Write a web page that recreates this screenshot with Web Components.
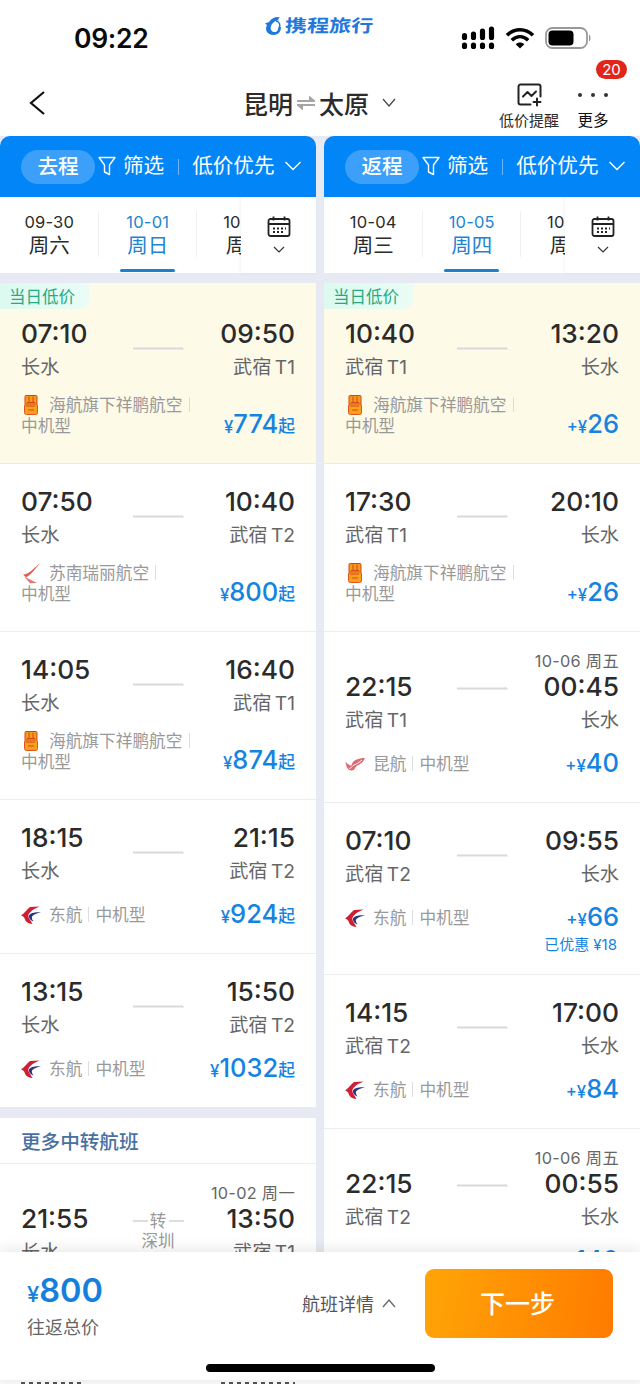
<!DOCTYPE html>
<html lang="zh-CN">
<head>
<meta charset="utf-8">
<title>昆明 - 太原</title>
<style>
  body {
    margin: 0;
    background: #fff;
    font-family: Inter, "Noto Sans CJK SC", sans-serif;
    color: #2b2b2b;
  }
</style>
</head>
<body>
<flight-app></flight-app>

<script>
const LOGOS = {
  lucky: `<svg width="20" height="22" viewBox="0 0 20 22">
    <rect x="4" y="1.500" width="12" height="9.500" rx="1" fill="#f59a1c" stroke="#d9421e"/>
    <rect x="3.500" y="10" width="13" height="10.500" rx="2" fill="#f8a01b" stroke="#e0531c"/>
    <path d="M8 2.500v6M12 2.500v6M6 8.500h8M5 12h9M7 16h6" stroke="#cf4b1b" fill="none"/></svg>`,
  ruili: `<svg width="20" height="22" viewBox="0 0 20 22">
    <path d="M19 1C15 6 10 13 5 15.300L2 12.500C8 12.500 13 6 19 1z" fill="#de5a4e"/>
    <path d="M3 14.500l5 2.500 8 4-7 .3-3-3.500z" fill="#e07a70"/></svg>`,
  kunming: `<svg width="20" height="22" viewBox="0 0 20 22">
    <path d="M20 5C12 5 7 8 6.500 12.500 5 13 2.500 11 .5 8.500 1 14 3 17.500 6.500 17.500c4 0 3-3.500 6-5 3-1.500 5.500-3 7.500-7.500z" fill="#dd6b73"/>
    <path d="M8 12.500c3-1 6-3 9-5.500M4 15.500c2-.5 3-1.500 4-3" stroke="#fff" stroke-width=".9" fill="none"/></svg>`,
  eastern: `<svg width="20" height="22" viewBox="0 0 20 22">
    <path d="M18.500 2.500 9 3C6 5.500 3 9.500 0 11.500c2 .3 3 1.500 4 4 1 2.500 3 4 7.500 4.500L8.500 15c-2-3.500-1-5 .5-6.500C11 6 14 4.500 18.500 2.500z" fill="#cf1f32"/>
    <path d="M20 8.300C15 7.800 9.500 8.500 8 11.500 7.500 14 9.500 16.500 12.500 17.500 10.500 14.500 10 12.500 13 10.800 15 9.500 18 8.800 20 8.300z" fill="#29337f"/></svg>`
};

const OUTBOUND = [
  {low: true, dep: '07:10', arr: '09:50', from: '长水', to: '武宿 T1', logo: 'lucky', airline: '海航旗下祥鹏航空', wrap: true, price: '774', from_price: true},
  {dep: '07:50', arr: '10:40', from: '长水', to: '武宿 T2', logo: 'ruili', airline: '苏南瑞丽航空', wrap: true, price: '800', from_price: true},
  {dep: '14:05', arr: '16:40', from: '长水', to: '武宿 T1', logo: 'lucky', airline: '海航旗下祥鹏航空', wrap: true, price: '874', from_price: true},
  {dep: '18:15', arr: '21:15', from: '长水', to: '武宿 T2', logo: 'eastern', airline: '东航', price: '924', from_price: true},
  {dep: '13:15', arr: '15:50', from: '长水', to: '武宿 T2', logo: 'eastern', airline: '东航', price: '1032', from_price: true, last: true}
];

const TRANSFER = [
  {dep: '21:55', arr: '13:50', date: '10-02 周一', from: '长水', to: '武宿 T1', via: '深圳'}
];

const INBOUND = [
  {low: true, dep: '10:40', arr: '13:20', from: '武宿 T1', to: '长水', logo: 'lucky', airline: '海航旗下祥鹏航空', wrap: true, price: '26'},
  {dep: '17:30', arr: '20:10', from: '武宿 T1', to: '长水', logo: 'lucky', airline: '海航旗下祥鹏航空', wrap: true, price: '26'},
  {dep: '22:15', arr: '00:45', date: '10-06 周五', from: '武宿 T1', to: '长水', logo: 'kunming', airline: '昆航', price: '40'},
  {dep: '07:10', arr: '09:55', from: '武宿 T2', to: '长水', logo: 'eastern', airline: '东航', price: '66', saved: '18'},
  {dep: '14:15', arr: '17:00', from: '武宿 T2', to: '长水', logo: 'eastern', airline: '东航', price: '84'},
  {dep: '22:15', arr: '00:55', date: '10-06 周五', from: '武宿 T2', to: '长水', logo: 'kunming', airline: '昆航', price: '140'}
];

class StatusBar extends HTMLElement {
  constructor() {
    super();
    this.attachShadow({mode: 'open'}).innerHTML = `
      <style>
        :host {
          display: grid;
          grid-template-columns: 1fr 112px 1fr;
          height: 70px;
        }
        svg { display: block; }
        .clock {
          padding: 22px 0 0 74px;
          font-size: 26.5px;
          line-height: 32px;
          font-weight: 600;
          letter-spacing: -.3px;
          color: #0a0a0a;
        }
        .brand {
          display: flex;
          align-items: center;
          gap: 2px;
          height: 20px;
          margin-top: 16px;
          color: #2277dc;
          white-space: nowrap;
        }
        .brand b {
          font-size: 17.5px;
          line-height: 20px;
          font-weight: 700;
          transform: skewX(-4deg) scaleX(1.26);
          transform-origin: left;
        }
        .signals {
          display: flex;
          gap: 10px;
          justify-content: flex-end;
          align-items: center;
          height: 26px;
          padding: 25px 48px 0 0;
        }
      </style>
      <div class="clock">09:22</div>
      <div class="brand">
        <svg width="19" height="20" viewBox="0 0 19 20">
          <path d="M5 6C8 1.500 13 0 16 1.500 14.500 2 14 3 14.500 4.500 12 4 10 5.500 8.500 7.500 5.500 11 6.500 15.500 10 16c3 .3 4.500-2 4-4.500 1.500.5 2.500 0 3-1 .3 4.500-2.500 8.500-7.500 8.500C3 19 .5 13.500 3 9L1 7.500z" fill="#2277dc"/>
          <path d="M12 5c4 1 4.500 4 3 7" stroke="#2277dc" stroke-width="1.500" fill="none"/>
        </svg>
        <b>携程旅行</b>
      </div>
      <div class="signals">
        <svg width="34" height="24" viewBox="0 0 34 24" stroke="#000" stroke-width="5.200" stroke-linecap="round">
          <path d="M3.500 9.500v2M12.500 8v3.500M21.500 5v6.500M30.500 3v8.500M3.500 19v1.500M12.500 19v1.500M21.500 19v1.500M30.500 19v1.500"/>
        </svg>
        <svg width="30" height="24" viewBox="0 0 30 24" fill="none" stroke="#000" stroke-width="3.600">
          <path d="M2 9.300c7.500-7.500 18.500-7.500 26 0M6.800 14.200c5-4.700 11.400-4.700 16.400 0"/>
          <path d="M15 22.500l-4.300-4.300c2.500-2.300 6.100-2.300 8.600 0z" fill="#000" stroke="none"/>
        </svg>
        <svg width="47" height="24" viewBox="0 0 47 24">
          <rect x="1" y="2" width="41" height="20" rx="6.500" fill="none" stroke="#999" stroke-width="1.800"/>
          <rect x="3.500" y="4.500" width="25" height="15" rx="4" fill="#000"/>
          <path d="M44 8.500c2 .8 2 6.200 0 7z" fill="#999"/>
        </svg>
      </div>
    `;
  }
}

class TitleBar extends HTMLElement {
  constructor() {
    super();
    this.attachShadow({mode: 'open'}).innerHTML = `
      <style>
        :host {
          display: grid;
          grid-template-columns: 1fr auto 1fr;
          height: 66px;
          color: #2b2b2b;
        }
        svg { display: block; }
        .back { padding: 20px 0 0 28px; }
        .route {
          display: flex;
          align-items: center;
          gap: 3px;
          height: 66px;
          font-size: 25px;
          font-weight: 500;
        }
        .route .down { margin-left: 9px; }
        .tools {
          display: flex;
          justify-content: flex-end;
          gap: 18px;
          padding: 12px 31px 0 0;
          font-size: 15px;
          line-height: 20px;
          white-space: nowrap;
        }
        .tool {
          display: flex;
          flex-direction: column;
          align-items: center;
          gap: 3px;
          position: relative;
        }
        .tool.more { font-size: 15.5px; color: #111; }
        .badge {
          position: absolute;
          top: -22px;
          left: 19px;
          width: 31px;
          height: 19px;
          border-radius: 10px;
          background: #e0251b;
          color: #fff;
          font-size: 15px;
          line-height: 19px;
          text-align: center;
        }
      </style>
      <div class="back">
        <svg width="18" height="26" viewBox="0 0 18 26" fill="none" stroke="#111" stroke-width="2.200"><path d="M16 2 3 13l13 11"/></svg>
      </div>
      <div class="route">
        <span>昆明</span>
        <svg width="20" height="18" viewBox="0 0 20 18" fill="#a5a5a5"><path d="M1 6h12V1.500L19 6.500V8H1zM19 12H7v4.500L1 11.500V10h18z"/></svg>
        <span>太原</span>
        <svg class="down" width="16" height="12" viewBox="0 0 16 12" fill="none" stroke="#444" stroke-width="1.200"><path d="M2 2l6 7 6-7"/></svg>
      </div>
      <div class="tools">
        <div class="tool">
          <svg width="27" height="26" viewBox="0 0 27 26" fill="none" stroke="#222" stroke-width="2" stroke-linecap="round" stroke-linejoin="round">
            <path d="M15.500 22.500H5.500A2 2 0 0 1 3.500 20.500V4.500A2 2 0 0 1 5.500 2.500h18A2 2 0 0 1 25.500 4.500v10M8 14.500l4.500-4.500 4 4 4.500-4.500M18.500 20h7M22 16.500v7"/>
          </svg>
          <span>低价提醒</span>
        </div>
        <div class="tool more">
          <svg width="32" height="26" viewBox="0 0 32 26" fill="#333"><circle cx="3" cy="13" r="2"/><circle cx="16" cy="13" r="2"/><circle cx="29" cy="13" r="2"/></svg>
          <span>更多</span>
          <span class="badge">20</span>
        </div>
      </div>
    `;
  }
}

class ColumnHead extends HTMLElement {
  connectedCallback() {
    this.attachShadow({mode: 'open'}).innerHTML = `
      <style>
        :host {
          display: flex;
          align-items: center;
          box-sizing: border-box;
          height: 61px;
          padding: 0 0 1px 21px;
          border-radius: 10px 10px 0 0;
          background: #0286f7;
          color: #fff;
          font-size: 20.6px;
          line-height: 34px;
          white-space: nowrap;
        }
        .pill {
          width: 74px;
          height: 34px;
          margin-top: 1px;
          border-radius: 17px;
          background: #3c9ffa;
          text-align: center;
          font-weight: 500;
        }
        .funnel { margin: 0 7px 0 3px; }
        i {
          width: 1px;
          height: 16px;
          margin: 1px 13px 0 14px;
          background: #6bb8fb;
        }
        .down { margin-left: 9px; }
      </style>
      <span class="pill"><slot></slot></span>
      <svg class="funnel" width="18" height="20" viewBox="0 0 18 20" fill="none" stroke="#fff" stroke-width="1.400" stroke-linejoin="round"><path d="M1 1.500h16L11.500 9v9.500l-5-2.500V9z"/></svg>
      <span>筛选</span><i></i><span>低价优先</span>
      <svg class="down" width="18" height="12" viewBox="0 0 18 12" fill="none" stroke="#fff" stroke-width="1.400"><path d="M1.500 2 9 9.500 16.500 2"/></svg>
    `;
  }
}

class DateStrip extends HTMLElement {
  set days(days) {
    this.attachShadow({mode: 'open'}).innerHTML = `
      <style>
        :host {
          display: grid;
          grid-template-columns: 241px 1fr;
          height: 76px;
          background: #fff;
        }
        .days {
          display: flex;
          overflow: hidden;
        }
        .day {
          flex: 0 0 98.5px;
          box-sizing: border-box;
          display: flex;
          flex-direction: column;
          align-items: center;
          padding-top: 14px;
          font-size: 16.5px;
          line-height: 23px;
          background: linear-gradient(#f0f0f2, #f0f0f2) right 14px / 1px 46px no-repeat;
        }
        .day span { letter-spacing: .2px; }
        .day b {
          font-size: 20.5px;
          font-weight: 400;
        }
        .day.on { color: #1e84d4; }
        .day.on::after {
          content: "";
          width: 55px;
          height: 3px;
          margin-top: 12px;
          border-radius: 2px;
          background: #1e7fd0;
        }
        .cal {
          display: flex;
          flex-direction: column;
          align-items: center;
          gap: 8px;
          padding-top: 19px;
          box-shadow: -1px 0 3px rgba(0, 0, 0, .05);
        }
      </style>
      <div class="days">
        ${days.map(([date, week], i) => `<div class="day ${i === 1 ? 'on' : ''}"><span>${date}</span><b>${week}</b></div>`).join('')}
      </div>
      <div class="cal">
        <svg width="24" height="22" viewBox="0 0 24 22" fill="none" stroke="#222" stroke-width="1.800">
          <rect x="1.500" y="3" width="21" height="17" rx="2"/><path d="M1.500 8h21M6.500 .5v4M17.500 .5v4"/>
          <path d="M6 12.500h2m2 0h2m2 0h2m2 0h1M6 16h2m2 0h2m2 0h2"/>
        </svg>
        <svg width="12" height="8" viewBox="0 0 12 8" fill="none" stroke="#333" stroke-width="1.200"><path d="M1 1l5 5 5-5"/></svg>
      </div>
    `;
  }
}

class FlightCard extends HTMLElement {
  set flight(f) {
    this.classList.toggle('low', !!f.low);
    this.classList.toggle('last', !!f.last);
    this.attachShadow({mode: 'open'}).innerHTML = `
      <style>
        :host {
          display: block;
          background: #fff;
          border-bottom: 1px solid #ebecf0;
        }
        :host(.low) { background: #fdfae8; }
        :host(.last) { border-bottom: 0; }
        .tag {
          width: 89px;
          height: 26px;
          box-sizing: border-box;
          padding-left: 9px;
          margin-bottom: -13px;
          background: linear-gradient(90deg, #dcfaf0, #eafcf6);
          border-bottom-right-radius: 10px;
          color: #25ab82;
          font-size: 16.5px;
          line-height: 28px;
        }
        .trip {
          display: grid;
          grid-template-columns: 1fr 51px 1fr;
          padding: 22px 21px 0;
        }
        .end {
          display: flex;
          flex-direction: column;
          justify-content: flex-end;
        }
        .end.arr { align-items: flex-end; }
        .date {
          height: 17px;
          font-size: 16.3px;
          line-height: 15px;
          letter-spacing: .3px;
          color: #666;
        }
        .time {
          height: 34px;
          font-size: 26.3px;
          line-height: 32px;
          font-weight: 500;
        }
        .port {
          height: 32px;
          font-size: 19.2px;
          line-height: 30px;
          word-spacing: -2px;
          color: #666;
          white-space: nowrap;
        }
        .line {
          margin-top: ${f.date ? 31 : 27}px;
          width: 52px;
        }
        .via {
          display: grid;
          grid-template-columns: 15px 18px 15px;
          align-items: center;
          justify-content: space-between;
          align-content: start;
          margin-top: 25px;
          font-size: 16.5px;
          line-height: 20px;
          color: #999;
          text-align: center;
        }
        .via i {
          height: 2px;
          background: #ddd;
        }
        .via span:last-child { grid-column: 1 / 4; }
        .info {
          display: flex;
          justify-content: space-between;
          height: ${f.saved ? 83 : f.wrap ? 79 : 65}px;
          box-sizing: border-box;
          padding: ${f.wrap ? 10 : 15}px 21px 0;
        }
        .airline {
          font-size: 16.7px;
          line-height: ${f.wrap ? 21 : 24}px;
          color: #999;
          white-space: nowrap;
        }
        .airline svg {
          vertical-align: -5px;
          margin-right: 8px;
        }
        .airline i {
          display: inline-block;
          width: 1px;
          height: 15px;
          margin: 0 6px;
          vertical-align: -1px;
          background: #ddd;
        }
        .cost {
          margin-top: ${f.wrap ? 14 : -5}px;
          text-align: right;
          color: #1584e0;
          font-size: 16.8px;
          line-height: 32px;
          font-weight: 500;
          white-space: nowrap;
        }
        .cost b {
          font-size: 25.5px;
          font-weight: 500;
        }
        .cost em {
          font-style: normal;
          vertical-align: 1.5px;
        }
        .cost small {
          display: block;
          margin: -3px 2px 0 0;
          font-size: 15px;
          line-height: 24px;
          font-weight: 400;
        }
      </style>
      ${f.low ? '<div class="tag">当日低价</div>' : ''}
      <div class="trip">
        <div class="end">
          <span class="time">${f.dep}</span>
          <span class="port">${f.from}</span>
        </div>
        ${f.via
          ? `<div class="via"><i></i><span>转</span><i></i><span>${f.via}</span></div>`
          : '<svg class="line" width="52" height="6" viewBox="0 0 52 6"><path d="M0 2.500h48.500V1.500L51.500 4.500H0z" fill="#d9d9db"/></svg>'}
        <div class="end arr">
          ${f.date ? `<span class="date">${f.date}</span>` : ''}
          <span class="time">${f.arr}</span>
          <span class="port">${f.to}</span>
        </div>
      </div>
      <div class="info">
        ${f.airline ? `
          <div class="airline">${LOGOS[f.logo]}${f.airline}<i></i>${f.wrap ? '<br>' : ''}中机型</div>
          <div class="cost">${f.from_price ? '' : '+'}¥<b>${f.price}</b>${f.from_price ? '<em>起</em>' : ''}
            ${f.saved ? `<small>已优惠 ¥${f.saved}</small>` : ''}
          </div>
        ` : ''}
      </div>
    `;
  }
}

class FlightColumn extends HTMLElement {
  set data({name, days, groups}) {
    const root = this.attachShadow({mode: 'open'});
    root.innerHTML = `
      <style>
        :host {
          display: block;
          min-width: 0;
        }
        date-strip { margin-bottom: 10px; }
        h2 {
          margin: 11px 0 0;
          height: 45px;
          padding-left: 21px;
          border-bottom: 1px solid #ebecf0;
          background: #fff;
          color: #49719f;
          font-size: 19.6px;
          line-height: 48px;
          font-weight: 500;
        }
      </style>
      <column-head>${name}</column-head>
      <date-strip></date-strip>
    `;
    root.querySelector('date-strip').days = days;
    groups.forEach((group) => {
      if (group.title) {
        const heading = document.createElement('h2');
        heading.textContent = group.title;
        root.append(heading);
      }
      group.flights.forEach((flight) => {
        const card = document.createElement('flight-card');
        card.flight = flight;
        root.append(card);
      });
    });
  }
}

class BookingBar extends HTMLElement {
  constructor() {
    super();
    this.attachShadow({mode: 'open'}).innerHTML = `
      <style>
        :host {
          display: grid;
          grid-template-rows: 111px 17px;
          background: #fff;
          box-shadow: 0 -2px 14px rgba(0, 0, 0, .1);
        }
        .row {
          display: flex;
          align-items: flex-start;
          padding: 17px 27px 0;
        }
        .total {
          flex: 1;
          display: flex;
          flex-direction: column;
          gap: 2px;
          color: #666;
          font-size: 18px;
        }
        .total span { line-height: 27px; }
        .total div {
          height: 43px;
          line-height: 43px;
          color: #1580dc;
          font-size: 22px;
          font-weight: 500;
        }
        .total b { font-size: 32.5px; font-weight: 600; }
        .detail {
          display: flex;
          align-items: center;
          gap: 8px;
          height: 68px;
          margin-right: 29px;
          color: #555;
          font-size: 18px;
        }
        button {
          width: 188px;
          height: 69px;
          padding: 0 3px 3px 0;
          border: 0;
          border-radius: 9px;
          background: linear-gradient(100deg, #ffa507, #ff7b00);
          color: #fff;
          font: inherit;
          font-size: 25px;
          font-weight: 500;
        }
        .home {
          width: 229px;
          height: 8px;
          margin: 1px auto 0;
          border-radius: 4px;
          background: #000;
        }
      </style>
      <div class="row">
        <div class="total"><div>¥<b>800</b></div><span>往返总价</span></div>
        <div class="detail">航班详情
          <svg width="14" height="12" viewBox="0 0 14 12" fill="none" stroke="#666" stroke-width="1.300"><path d="M1 10l6-7 6 7"/></svg>
        </div>
        <button>下一步</button>
      </div>
      <div class="home"></div>
    `;
  }
}

class FlightApp extends HTMLElement {
  connectedCallback() {
    const root = this.attachShadow({mode: 'open'});
    root.innerHTML = `
      <style>
        :host {
          display: grid;
          grid-template-rows: 70px 66px 1116px 128px 4px;
          width: 640px;
          height: 1384px;
          overflow: hidden;
        }
        .columns {
          display: grid;
          grid-template-columns: 316px 316px;
          gap: 8px;
          overflow: hidden;
          background: #e8eaf3;
        }
        booking-bar { z-index: 1; }
        /* sliver of the list that shows under the booking bar */
        .under {
          display: flex;
          gap: 136px;
          overflow: hidden;
          padding-left: 21px;
          background: #fafafa;
        }
        .under i {
          width: 64px;
          height: 2px;
          margin-top: 2px;
          background: repeating-linear-gradient(90deg, #555 0 4px, transparent 4px 8px);
        }
        .under i + i { width: 74px; }
      </style>
      <status-bar></status-bar>
      <title-bar></title-bar>
      <div class="columns">
        <flight-column></flight-column>
        <flight-column></flight-column>
      </div>
      <booking-bar></booking-bar>
      <div class="under"><i></i><i></i></div>
    `;
    const [go, back] = root.querySelectorAll('flight-column');
    go.data = {
      name: '去程',
      days: [['09-30', '周六'], ['10-01', '周日'], ['10-02', '周一']],
      groups: [{flights: OUTBOUND}, {title: '更多中转航班', flights: TRANSFER}]
    };
    back.data = {
      name: '返程',
      days: [['10-04', '周三'], ['10-05', '周四'], ['10-06', '周五']],
      groups: [{flights: INBOUND}]
    };
  }
}

customElements.define('status-bar', StatusBar);
customElements.define('title-bar', TitleBar);
customElements.define('column-head', ColumnHead);
customElements.define('date-strip', DateStrip);
customElements.define('flight-card', FlightCard);
customElements.define('flight-column', FlightColumn);
customElements.define('booking-bar', BookingBar);
customElements.define('flight-app', FlightApp);
</script>
</body>
</html>
